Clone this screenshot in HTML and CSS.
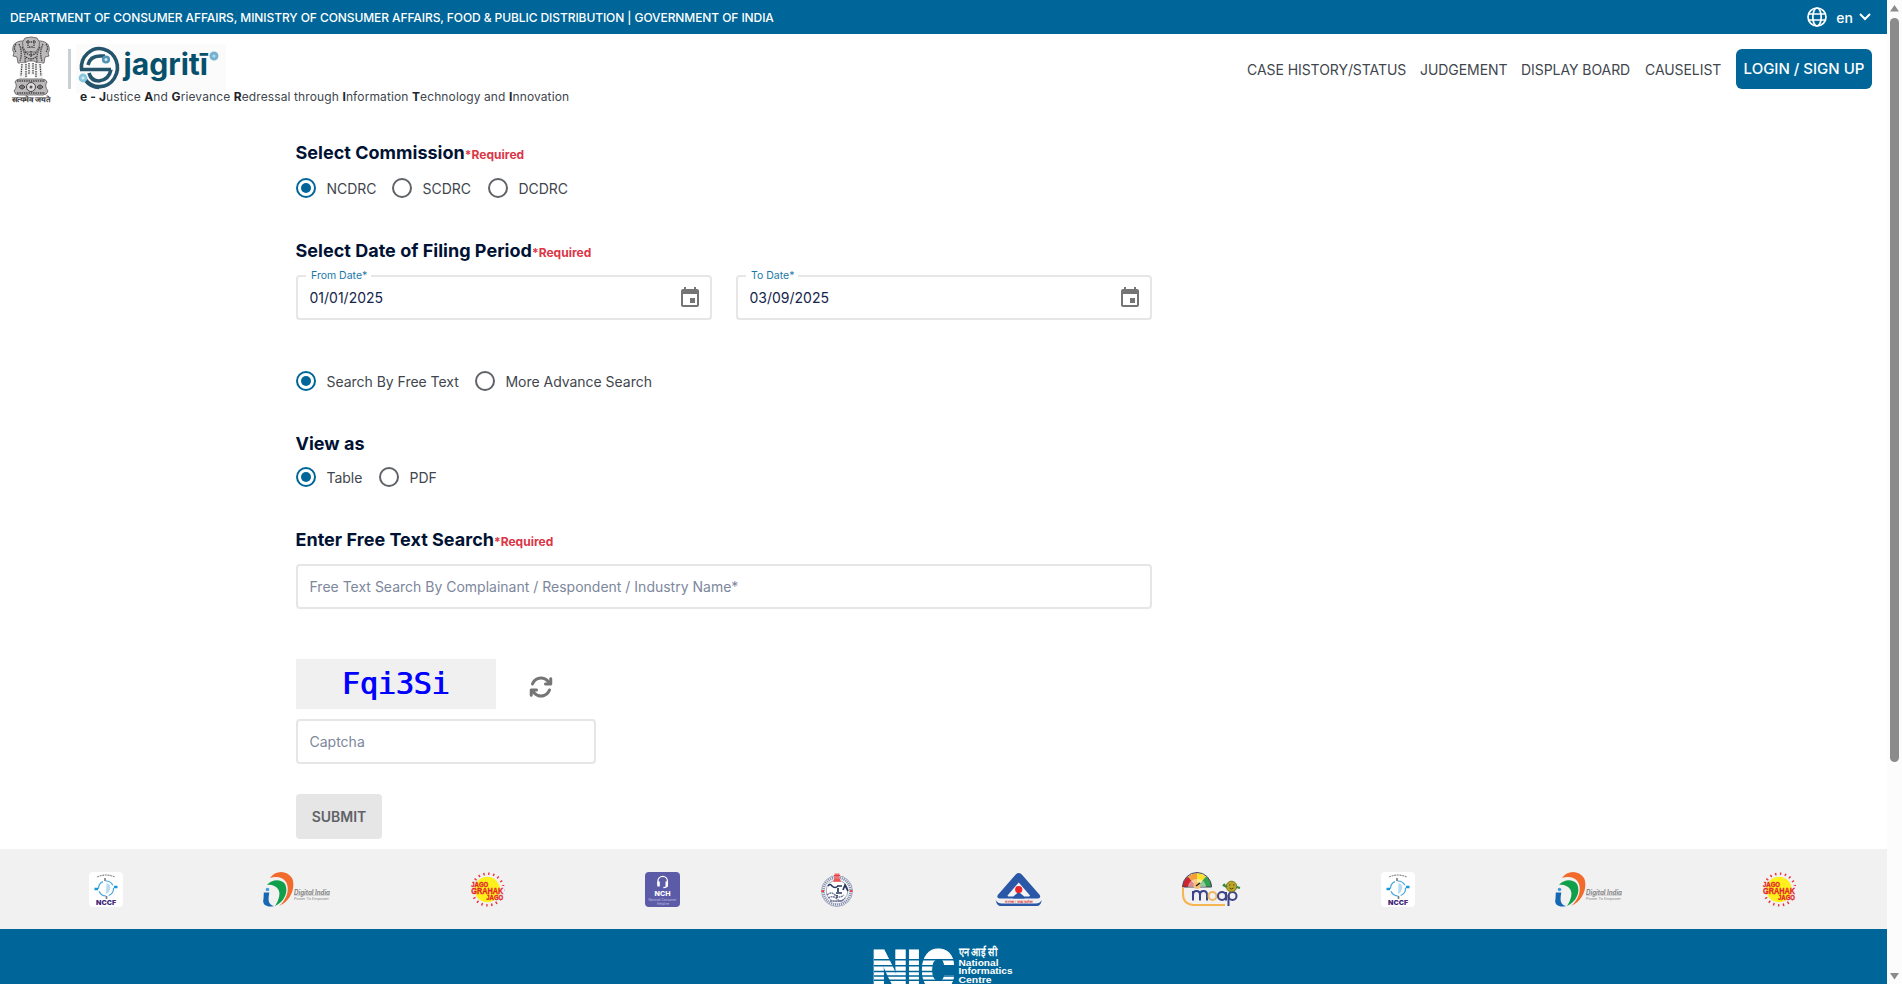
FILE: index.html
```html
<!DOCTYPE html>
<html lang="en">
<head>
<meta charset="utf-8">
<title>e-Jagriti</title>
<link rel="stylesheet" href="styles.css">
</head>
<body>
<svg class="defs" width="0" height="0">
  <symbol id="cal" viewBox="0 0 24 24"><path fill="#757575" d="M19 3h-1V1h-2v2H8V1H6v2H5c-1.110 0-1.990.9-1.990 2L3 19c0 1.100.890 2 2 2h14c1.100 0 2-.9 2-2V5c0-1.100-.9-2-2-2zm0 16H5V8h14v11z"/><path fill="#757575" d="M17 12h-5v5h5z"/></symbol>
  <symbol id="nccf" viewBox="0 0 34 35">
    <rect width="34" height="35" rx="4" fill="#fff"/>
    <path d="M8 5Q17 1 25.500 5" fill="none" stroke="#888" stroke-width="1.200" stroke-dasharray="2 .7"/>
    <circle cx="17" cy="16.500" r="7.500" fill="none" stroke="#46a8dc" stroke-width="1.200" stroke-dasharray="9 2.500"/>
    <path d="M17.500 11q5 1.500 3.500 6-1 4-4 5z" fill="#b5dcf0"/>
    <path d="M16 6v3M17.500 24v3" stroke="#777" stroke-width="1.600"/>
    <path d="M5.500 17H9M25 15h3.500" stroke="#1899d6" stroke-width="2.400"/>
    <text x="7" y="33" font-size="6.500" font-weight="900" fill="#432879" textLength="20" lengthAdjust="spacingAndGlyphs">NCCF</text>
  </symbol>
  <symbol id="digital" viewBox="0 0 67 35">
    <path d="M7 6C12-2 24-2 29 6c4 9-1 23-13 28 8-7 11-17 7-24-3-5-10-6-16-4z" fill="#f26a2c"/>
    <path d="M4 13c5-6 14-6 18-1 4 8-1 18-10 22 4-6 6-13 3-17-2-3-7-5-11-4z" fill="#10a04b"/>
    <path d="M.800 20.500h5.500c-1 6-2 12 5 13.500C3 36-1 32 .500 27z" fill="#1668b3"/>
    <circle cx="4.500" cy="17.500" r="1.800" fill="#4b9bd3"/>
    <text x="31" y="22.500" font-size="7" font-weight="700" font-style="italic" fill="#858585" textLength="36" lengthAdjust="spacingAndGlyphs">Digital India</text>
    <path d="M31 23.300h36" stroke="#aaa" stroke-width=".5"/>
    <text x="31" y="27.500" font-size="3.400" fill="#888" textLength="35" lengthAdjust="spacingAndGlyphs">Power To Empower</text>
  </symbol>
  <symbol id="jago" viewBox="0 0 34 35">
    <circle cx="17.500" cy="17.500" r="15.800" fill="none" stroke="#ee3038" stroke-width="2.600" stroke-dasharray="1.400 3.560"/>
    <path d="M0 10h6v13H0zM29 14h5v14h-5z" fill="#f1f1f1"/>
    <circle cx="17" cy="17.500" r="12.700" fill="#fff01d"/>
    <g font-family="'Liberation Sans', sans-serif" font-weight="700" fill="#e3262d" stroke="#e3262d" stroke-width=".35">
    <text x="1" y="15" font-size="7" textLength="17" lengthAdjust="spacingAndGlyphs">JAGO</text>
    <text x="1" y="22.200" font-size="9.500" textLength="32" lengthAdjust="spacingAndGlyphs">GRAHAK</text>
    <text x="16" y="28" font-size="7" textLength="17" lengthAdjust="spacingAndGlyphs">JAGO</text></g>
  </symbol>
</svg>
<div class="window">
  <div class="page">
    <div class="topbar">
      <span class="dept">DEPARTMENT OF CONSUMER AFFAIRS, MINISTRY OF CONSUMER AFFAIRS, FOOD &amp; PUBLIC DISTRIBUTION | GOVERNMENT OF INDIA</span>
      <div class="lang">
        <svg width="20" height="20" viewBox="0 0 20 20" fill="none" stroke="#fff" stroke-width="1.700"><circle cx="10" cy="10" r="9"/><ellipse cx="10" cy="10" rx="4.200" ry="9"/><path d="M1.800 7h16.400M1.800 13h16.400"/></svg>
        <span>en</span>
        <svg width="12" height="8" viewBox="0 0 12 8" fill="none" stroke="#fff" stroke-width="2"><path d="M1 1l5 5 5-5"/></svg>
      </div>
    </div>
    <header class="header">
      <svg class="emblem" width="40" height="68" viewBox="0 0 40 68">
        <g fill="#bdbabb" stroke="#5b585a" stroke-width=".8">
          <path d="M10 5q-7 1-8 6-1 4 1 6l-1 3 4 1 1 6h7l3-2h6l3 2h7l1-6 4-1-1-3q2-2 1-6-1-5-8-6z"/>
          <path d="M14 2q6-2 12 0 4 4 2 9l-3 5H15l-3-5q-2-5 2-9z"/>
          <path d="M9 27l-1 14 2 3 2-4 1 4h3l1-5h6l1 5h3l1-4 2 4 2-3-1-14z" fill="#f2f2f2" stroke="none"/>
          <path d="M4 46q1-3 5-3h22q4 0 5 3-3 4 1 9-1 4-5 4H8q-4 0-5-4 4-5 1-9z"/>
        </g>
        <g fill="none" stroke="#434043" stroke-width="1.300" stroke-dasharray="1.500 .8">
          <path d="M5 8q-3 4 0 8M35 8q3 4 0 8M8 8q4 8 1 17M32 8q-4 8-1 17M11 11q4 8 3 15M29 11q-4 8-3 15M14 16q6 6 12 0M15 21q5 4 10 0M17 4v8M23 4v8M15 6h10M18 11h4M20 15v10"/>
          <path d="M11 28l-1 12M15 28v13M18 27v11M22 27v11M25 28v13M29 28l1 12M6 45h28M6 57h28"/>
        </g>
        <circle cx="20" cy="51" r="4.500" fill="#ddd" stroke="#454345"/><circle cx="20" cy="51" r="1.500" fill="#555"/>
        <path d="M8 51q3-4 6 0-3 4-6 0M26 51q3-4 6 0-3 4-6 0" fill="#777" stroke="#444"/>
        <text x="0.500" y="65.800" font-size="7" font-weight="700" fill="#333" textLength="39" lengthAdjust="spacingAndGlyphs">सत्यमेव जयते</text>
      </svg>
      <div class="divider"></div>
      <div class="brand">
        <svg class="logo" width="150" height="49" viewBox="0 0 150 49">
          <rect width="150" height="49" fill="#fbfbfb"/>
          <g fill="none" stroke="#24546c" stroke-width="3.600">
            <path d="M5.500 25.500a18 19 0 1 1 3.500 9.500M10 37a18 19 0 0 0 13 6.500"/>
            <path d="M4 25.500h31M12 21q2-9 12-9h5M13 29q2 8 10 8 10-1 12-11.500"/>
          </g>
          <circle cx="30" cy="15.500" r="2.800" fill="#d5e9f3" stroke="#5393b5" stroke-width="2.600"/>
          <circle cx="7" cy="34" r="3" fill="#d5edf6" stroke="#88c8df" stroke-width="2.800"/>
          <text x="47.500" y="31" font-size="30" font-weight="700" fill="#07506b" textLength="84.500" lengthAdjust="spacingAndGlyphs">jagritī</text>
          <circle cx="138" cy="12" r="3" fill="#b9dbe9" stroke="#76b2cd" stroke-width="3"/>
        </svg>
        <p class="tagline"><b>e - J</b>ustice <b>A</b>nd <b>G</b>rievance <b>R</b>edressal through <b>I</b>nformation <b>T</b>echnology and <b>I</b>nnovation</p>
      </div>
      <nav class="nav">
        <a class="n1">CASE HISTORY/STATUS</a><a class="n2">JUDGEMENT</a><a class="n3">DISPLAY BOARD</a><a class="n4">CAUSELIST</a>
        <button class="login">LOGIN / SIGN UP</button>
      </nav>
    </header>
    <main class="form">
      <h2>Select Commission<small>*Required</small></h2>
      <div class="radios r-first">
        <label class="w96"><i class="dot on"></i>NCDRC</label><label class="w96"><i class="dot"></i>SCDRC</label><label><i class="dot"></i>DCDRC</label>
      </div>
      <h2>Select Date of Filing Period<small>*Required</small></h2>
      <div class="dates">
        <div class="field"><span class="flabel">From Date*</span><span class="val">01/01/2025</span><svg width="24" height="24"><use href="#cal"/></svg></div>
        <div class="field"><span class="flabel">To Date*</span><span class="val">03/09/2025</span><svg width="24" height="24"><use href="#cal"/></svg></div>
      </div>
      <div class="radios r-mode">
        <label class="w179"><i class="dot on"></i>Search By Free Text</label><label><i class="dot"></i>More Advance Search</label>
      </div>
      <h2>View as</h2>
      <div class="radios r-view">
        <label class="w83"><i class="dot on"></i>Table</label><label><i class="dot"></i>PDF</label>
      </div>
      <h2>Enter Free Text Search<small>*Required</small></h2>
      <div class="field wide"><span class="ph">Free Text Search By Complainant / Respondent / Industry Name*</span></div>
      <div class="captcha">
        <div class="code">Fqi3Si</div>
        <svg width="24" height="24" viewBox="0 0 512 512"><path fill="#757575" d="M105.100 202.600c7.700-21.800 20.200-42.300 37.800-59.800c62.500-62.500 163.800-62.500 226.300 0L386.300 160H352c-17.700 0-32 14.300-32 32s14.300 32 32 32H463.500c17.700 0 32-14.300 32-32V80c0-17.700-14.300-32-32-32s-32 14.300-32 32v35.200L414.400 97.600c-87.500-87.500-229.300-87.500-316.800 0C73.200 122 55.600 150.700 44.800 181.400c-5.900 16.700 2.900 34.900 19.500 40.800s34.900-2.900 40.800-19.500zM39 289.300c-5 1.500-9.800 4.200-13.700 8.200c-4 4-6.700 8.800-8.100 14c-.3 1.200-.6 2.500-.8 3.800c-.3 1.700-.4 3.400-.4 5.100V432c0 17.700 14.300 32 32 32s32-14.300 32-32V396.900l17.600 17.500c87.500 87.400 229.300 87.400 316.700 0c24.400-24.400 42.100-53.100 52.900-83.700c5.900-16.700-2.900-34.900-19.500-40.800s-34.900 2.900-40.800 19.500c-7.700 21.800-20.200 42.300-37.800 59.800c-62.500 62.500-163.800 62.500-226.300 0l-.1-.1L125.600 352H160c17.700 0 32-14.300 32-32s-14.300-32-32-32H48.400c-1.600 0-3.200 .1-4.800 .3s-3.100 .5-4.600 1z"/></svg>
      </div>
      <div class="field small"><span class="ph">Captcha</span></div>
      <button class="submit">SUBMIT</button>
    </main>
    <section class="partners">
      <svg width="34" height="35"><use href="#nccf"/></svg>
      <svg width="67" height="35"><use href="#digital"/></svg>
      <svg width="34.500" height="35"><use href="#jago"/></svg>
      <svg width="35" height="35" viewBox="0 0 35 35">
        <rect width="35" height="35" rx="4" fill="#5c5ba7"/>
        <path d="M13 13V9a4.700 4.700 0 0 1 9.400 0v4q0 2.500-4 2.500" fill="none" stroke="#fff" stroke-width="1.300"/>
        <path d="M12.300 9.500h2.500v5h-2.500zM20.500 9.500H23v5h-2.500z" fill="#fff"/>
        <text x="9.500" y="24" font-size="6.500" font-weight="800" fill="#fff" textLength="16" lengthAdjust="spacingAndGlyphs">NCH</text>
        <g fill="#c4c3e4" font-size="3"><text x="3.500" y="28.800" textLength="28">National Consumer</text><text x="12" y="32.800" textLength="12">Helpline</text></g>
      </svg>
      <svg width="34" height="35" viewBox="0 0 34 35">
        <circle cx="17" cy="19" r="15.500" fill="#f8f8fa" stroke="#8b93ae" stroke-width=".8"/>
        <circle cx="17" cy="19" r="13.500" fill="none" stroke="#8891ad" stroke-width="2.600" stroke-dasharray="1.200 .8"/>
        <circle cx="17" cy="19" r="10.800" fill="#fff" stroke="#67718f" stroke-width=".6"/>
        <path d="M8 14q2-3 4 0 3 3 6 0M17 14h5M18 16v4M23 18l2-5 3 6M16 21h6M17 23v3" fill="none" stroke="#24365f" stroke-width="1.700"/>
        <path d="M7 23q4-4 8 0t9 0M8 26q5-3 9 1t8-1M10 29h13" fill="none" stroke="#6d7796" stroke-width="1.400" stroke-dasharray="2 .6"/>
        <path d="M14.500 1.500h5v4l1.500 4.500h-8l1.500-4.500z" fill="#ef7071"/><path d="M14 3.500h6M14 8h6" stroke="#e83c42"/>
        <path d="M1.500 19h2.500M30 19h2.500" stroke="#e8444a" stroke-width="2"/>
      </svg>
      <svg width="47.500" height="35" viewBox="0 0 46 35">
        <path d="M23 1q2 0 3.500 2L44 23q1.500 3.500-2 3.500H4Q.500 26.500 2 23L19.500 3Q21 1 23 1z" fill="#2b57a7"/>
        <path d="M23 10.500l11 12.700q.700 1.200-1 1.300h-4.500L23 20l-5.500 4.500H13q-1.700-.1-1-1.300z" fill="#f4f4f4"/>
        <path d="M23 21l-6 5.500h12z" fill="#2b57a7"/>
        <circle cx="23" cy="17.500" r="3.600" fill="#e8242d"/>
        <path d="M0 28q1 6 5 6h36q4 0 5-6-2 3.500-6 3.500H6q-4 0-6-3.500z" fill="#2b57a7"/>
        <text x="9.500" y="30.500" font-size="3.500" font-weight="700" fill="#df5053" textLength="28" lengthAdjust="spacingAndGlyphs">मानकः पथप्रदर्शकः</text>
      </svg>
      <svg width="58" height="35" viewBox="0 0 58 35">
        <path d="M.500 15A15 14.500 0 0 1 6 4.500L15 15z" fill="#cb2531"/><path d="M6 4.500A15 14.500 0 0 1 15 1v14z" fill="#f3a03c"/><path d="M15 1a15 14.500 0 0 1 9 3.500L15 15z" fill="#fae12e"/><path d="M24 4.500A15 14.500 0 0 1 30 15H15z" fill="#35a14b"/>
        <path d="M.500 15a14.500 14.500 0 0 1 29 0z" fill="none" stroke="#434158"/>
        <path d="M6 15a9 8 0 0 1 18 0z" fill="#fff" opacity=".45"/>
        <circle cx="15" cy="13.500" r="3.500" fill="#f5c378"/><path d="M14 14l4-3" stroke="#222" stroke-width="1.500"/>
        <path d="M1 15v7q0 10 10 11h32" fill="none" stroke="#f4b552" stroke-width="2"/>
        <g fill="none" stroke="#3c4387" stroke-width="2"><path d="M11 28.500V19M11 23q0-4 3.500-4t3.500 4v5.500M18 23q0-4 3.500-4t3.500 4v5.500"/><circle cx="30.500" cy="24" r="4" stroke="#efb560"/><circle cx="40" cy="24" r="4"/><path d="M44 20v8.500"/><circle cx="50.500" cy="24" r="4"/><path d="M46.500 23v11"/></g>
        <circle cx="49.500" cy="14.500" r="5.300" fill="#bba42a" stroke="#777c23"/><path d="M47 13h1.500M51 13h1.500M47.500 16q2 2 4 0" stroke="#5b4b18" fill="none"/>
        <path d="M45 15l-4-2M54.500 15l3.500 1M43 12l-2 2" stroke="#398743" stroke-width="2"/>
      </svg>
      <svg width="34" height="35"><use href="#nccf"/></svg>
      <svg width="67" height="35"><use href="#digital"/></svg>
      <svg width="34" height="35"><use href="#jago"/></svg>
    </section>
    <footer class="footer">
      <svg width="142" height="40" viewBox="0 0 142 40">
        <text x="-2" y="45.500" font-size="55" font-weight="900" fill="#fff" stroke="#fff" textLength="83" lengthAdjust="spacingAndGlyphs">NIC</text>
        <path d="M0 15.800h81M0 21.800h81M0 27.500h81M0 32h81M0 36.200h81" stroke="#069" stroke-width="1.400"/>
        <g font-size="9.400" font-weight="700" fill="#fff" font-family="'Liberation Sans', sans-serif">
        <text x="85" y="12" font-size="11.500" textLength="38" lengthAdjust="spacingAndGlyphs">एन आई सी</text>
        <text x="84.500" y="21.500" textLength="40" lengthAdjust="spacingAndGlyphs">National</text>
        <text x="84.500" y="30.300" textLength="54" lengthAdjust="spacingAndGlyphs">Informatics</text>
        <text x="84.500" y="39" textLength="33" lengthAdjust="spacingAndGlyphs">Centre</text></g>
      </svg>
    </footer>
  </div>
  <div class="scrollbar">
    <svg width="9" height="7" viewBox="0 0 9 7"><path d="M4.500 0L9 6.500H0z" fill="#8b8b8b"/></svg>
    <div class="thumb"></div>
    <svg class="down" width="9" height="7" viewBox="0 0 9 7"><path d="M0 0h9L4.500 6.500z" fill="#8b8b8b"/></svg>
  </div>
</div>
</body>
</html>
```
FILE: styles.css
```css
* { box-sizing: border-box; }
body { margin: 0; font-family: Inter, "Liberation Sans", sans-serif; background: #fff; overflow: hidden; }
.defs { position: absolute; }
svg { display: block; flex: none; overflow: visible; }
.window { display: flex; width: 1902px; height: 984px; overflow: hidden; }
.page { width: 1887px; height: 984px; display: flex; flex-direction: column; overflow: hidden; }
.topbar { flex: none; height: 34px; background: #069; color: #fff; display: flex; align-items: center; justify-content: space-between; padding: 0 16px 0 10px; font-weight: 500; }
.dept { font-size: 12px; padding-top: 1px; letter-spacing: -0.085px; white-space: nowrap; }
.lang { display: flex; align-items: center; font-size: 14px; }
.lang span { margin: 1px 6px 0 9px; }
.header { flex: none; height: 79px; display: flex; align-items: flex-start; padding: 2px 15px 0 11px; }
.emblem { margin-right: 17px; }
.divider { width: 3px; height: 40px; margin: 13px 5px 0 0; background: #c9d0d5; }
.brand { flex: 1; padding-top: 8px; }
.tagline { margin: -5px 0 0 4px; position: relative; font-size: 12px; line-height: 18px; letter-spacing: 0.11px; color: #41464d; white-space: nowrap; }
.tagline b { color: #212529; font-weight: 700; }
.nav { display: flex; align-items: center; padding-top: 13px; font-size: 14px; letter-spacing: -0.06px; color: #41464d; white-space: nowrap; }
.n1 { width: 173px; } .n2 { width: 101px; } .n3 { width: 124px; } .n4 { width: 91px; }
.login { width: 136px; height: 40px; padding: 0 0 1px; border: 0; border-radius: 6px; background: #069; color: #fff; font: 500 15px Inter, sans-serif; }
.form { flex: none; height: 736px; padding: 26px 0 0 296px; display: flex; flex-direction: column; align-items: flex-start; }
h2 { margin: 0 0 0 -0.5px; font-size: 18px; line-height: 27px; height: 27px; letter-spacing: 0.02px; font-weight: 700; color: #001233; }
h2 small { font-size: 12px; color: #dc3545; font-weight: 700; }
.radios { display: flex; height: 20px; margin-bottom: 39px; font-size: 14px; letter-spacing: -0.03px; color: #41464d; }
.radios label { display: flex; align-items: center; height: 21px; white-space: nowrap; }
.r-first { margin-top: 12px; }
.r-mode { margin-top: 51px; }
.r-view { margin-top: 10px; }
.w96 { width: 96px; } .w179 { width: 179px; } .w83 { width: 83px; }
.dot { width: 20px; height: 20px; margin: -1px 10.5px 0 0; border: 2px solid #5f6368; border-radius: 50%; display: flex; align-items: center; justify-content: center; }
.dot.on { border-color: #069; }
.dot.on::after { content: ""; width: 10px; height: 10px; border-radius: 50%; background: #069; }
.dates { display: flex; gap: 24px; margin-top: 11px; }
.field { position: relative; width: 416px; height: 45px; border: 2px solid #e6e6e6; border-radius: 4px; display: flex; align-items: center; justify-content: space-between; padding: 0 8px 1px 11.5px; font-size: 14px; }
.field svg { margin-top: 2px; }
.flabel { position: absolute; left: 8px; top: -10px; padding: 0 4px 0 5px; background: #fff; font-size: 10.5px; line-height: 17px; color: #1a78a8; }
.val { color: #14244a; }
.ph { color: #7d879c; white-space: nowrap; }
.wide { width: 856px; margin-top: 11px; }
.captcha { display: flex; align-items: center; gap: 33px; margin-top: 50px; }
.captcha svg { margin-top: 5px; }
.code { width: 200px; height: 50px; background: #f0f0f0; color: #00f; font: 400 30px/50px "DejaVu Sans Mono", monospace; letter-spacing: -0.1px; text-shadow: 1px 0 #00f; padding-left: 45.5px; }
.small { width: 300px; margin-top: 10px; }
.submit { width: 86px; height: 45px; margin-top: 30px; padding: 0; border: 0; border-radius: 4px; background: #e6e6e6; color: #5f6368; font: 600 14px Inter, sans-serif; }
.partners { flex: none; height: 80px; background: #f1f1f1; display: flex; gap: 140.3px; padding: 23px 0 0 88.7px; }
.footer { flex: 1; background: #069; display: flex; justify-content: center; padding-top: 15px; }
.footer svg { margin-left: 3px; }
.scrollbar { width: 15px; background: #fcfcfc; display: flex; flex-direction: column; align-items: center; padding: 5px 0 4px; }
.thumb { width: 9px; height: 744px; margin-top: 6px; border-radius: 5px; background: #8b8b8b; }
.down { margin-top: auto; }
```
